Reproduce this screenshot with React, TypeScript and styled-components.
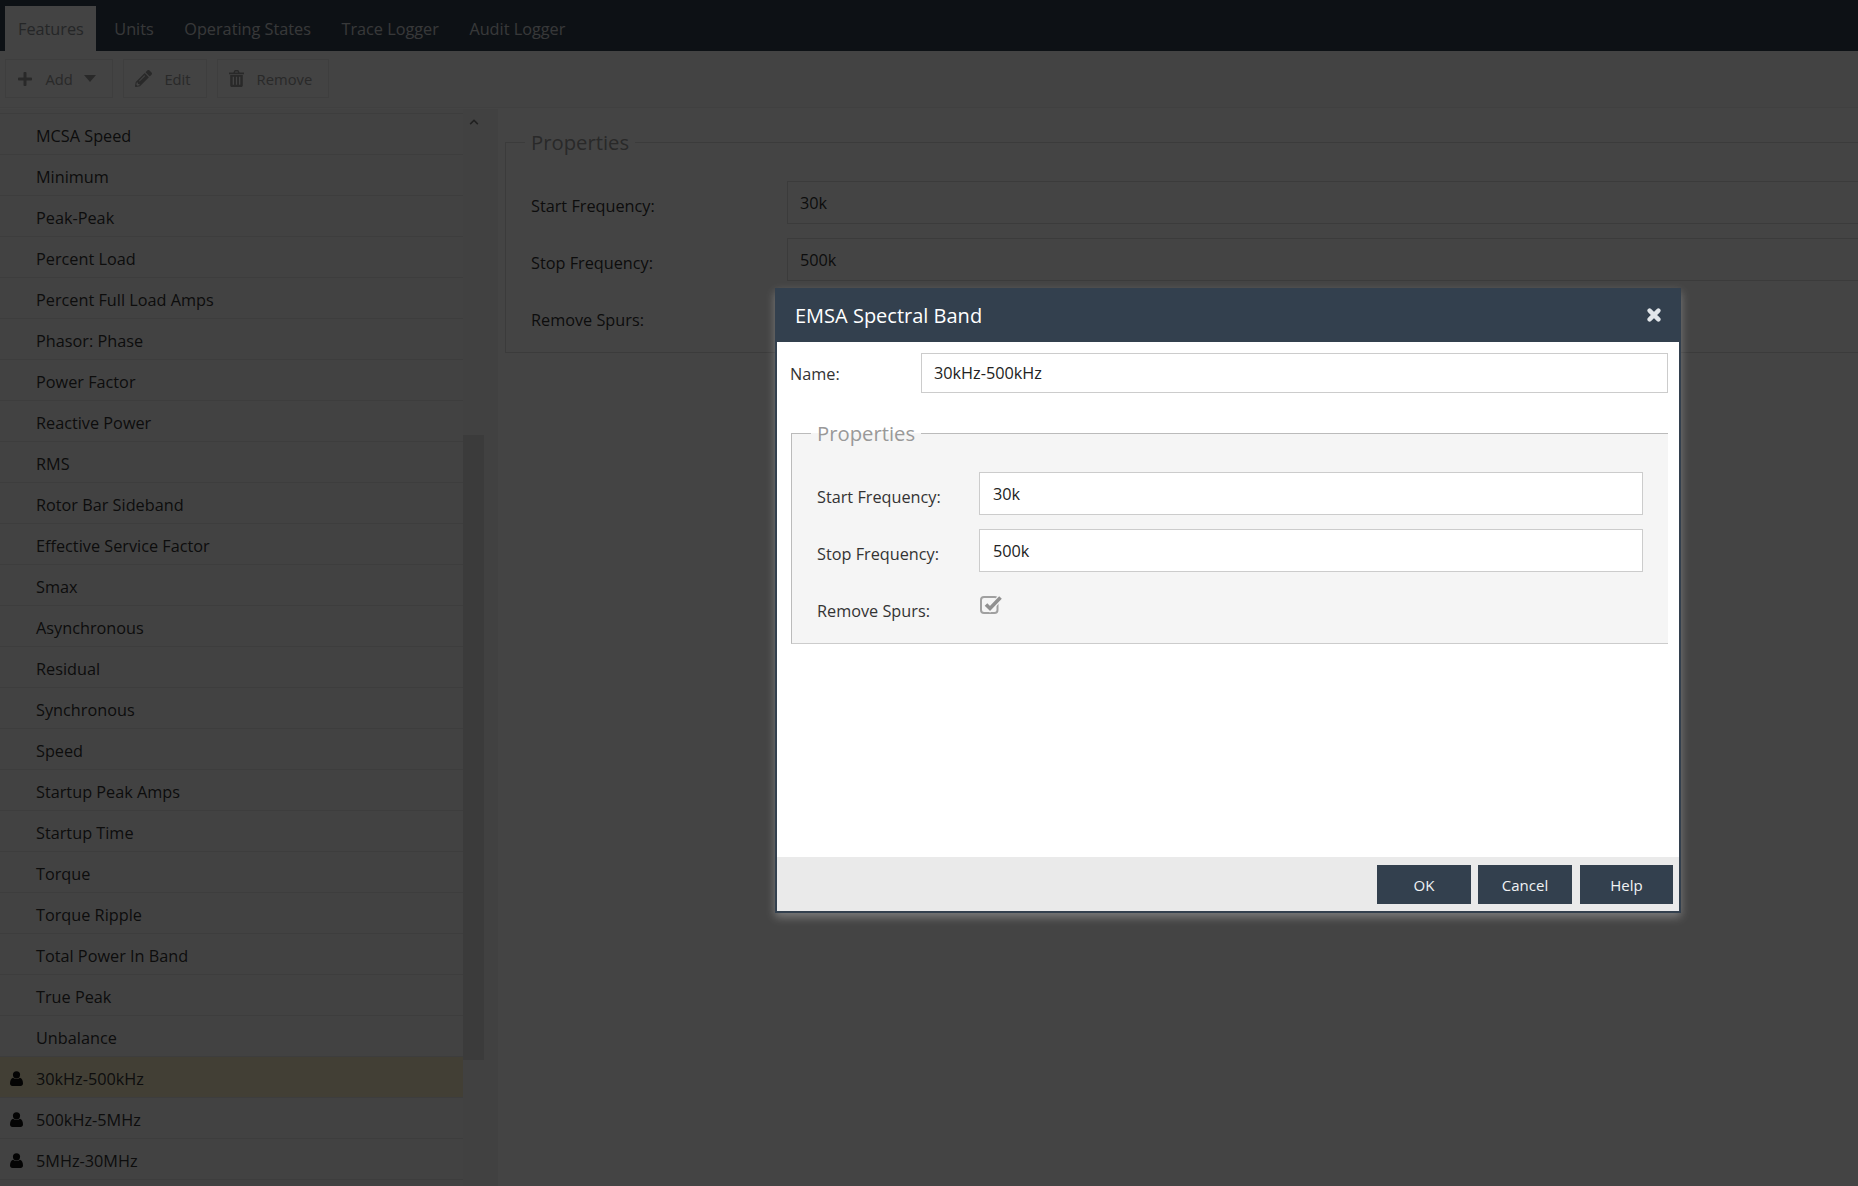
import styled, { createGlobalStyle } from 'styled-components';
import { FaChevronUp, FaPencilAlt, FaPlus } from 'react-icons/fa';

const TABS = ['Features', 'Units', 'Operating States', 'Trace Logger', 'Audit Logger'];

const FEATURES = [
  'MCSA Speed',
  'Minimum',
  'Peak-Peak',
  'Percent Load',
  'Percent Full Load Amps',
  'Phasor: Phase',
  'Power Factor',
  'Reactive Power',
  'RMS',
  'Rotor Bar Sideband',
  'Effective Service Factor',
  'Smax',
  'Asynchronous',
  'Residual',
  'Synchronous',
  'Speed',
  'Startup Peak Amps',
  'Startup Time',
  'Torque',
  'Torque Ripple',
  'Total Power In Band',
  'True Peak',
  'Unbalance',
];

const USER_FEATURES = ['30kHz-500kHz', '500kHz-5MHz', '5MHz-30MHz'];

const CheckIcon = () => (
  <svg width="22" height="20" viewBox="0 0 22 20">
    <rect x="1" y="2" width="16.5" height="16" rx="3" fill="none" stroke="#a0a0a0" strokeWidth="2" />
    <path d="M6 9.5l4 4L20.5 2.5" fill="none" stroke="#f5f5f5" strokeWidth="6" />
    <path d="M6 9.5l4 4L20.5 2.5" fill="none" stroke="#909090" strokeWidth="3.6" />
  </svg>
);

const TrashIcon = () => (
  <svg width="15" height="17" viewBox="0 0 15 17" fill="#999">
    <path d="M0 2.6h4.4l.8-1.9C5.4.3 5.8 0 6.2 0h2.6c.4 0 .8.3 1 .7l.8 1.9H15v1.6H0zM5.9 2.6h3.2l-.5-1.2H6.4z" />
    <path d="M1.2 5h12.6v10.2c0 1-.7 1.8-1.6 1.8H2.8c-.9 0-1.6-.8-1.6-1.8zM3.7 6.8v8h1.3v-8zM6.9 6.8v8h1.2v-8zM10 6.8v8h1.3v-8z" fillRule="evenodd" />
  </svg>
);

const UserIcon = () => (
  <svg width="13" height="15" viewBox="0 0 13 15" fill="currentColor">
    <circle cx="6.5" cy="3.8" r="3.6" />
    <path d="M0 12.6C0 9.6 1 7.4 3 6.8c1 .8 2.2 1.2 3.5 1.2S9 7.6 10 6.8c2 .6 3 2.8 3 5.8 0 1.5-1 2.4-2.4 2.4H2.4C1 15 0 14.1 0 12.6z" />
  </svg>
);

const CloseIcon = () => (
  <svg width="14" height="14" viewBox="0 0 14 14">
    <path d="M2.6 2.6l8.8 8.8M11.4 2.6l-8.8 8.8" fill="none" stroke="#e2e6ea" strokeWidth="4.4" strokeLinecap="round" />
  </svg>
);

const App = () => {
  return (
    <Page>
      <GlobalStyle />
      <TabBar>
        {TABS.map((tab, i) => (
          <Tab key={tab} $active={i === 0}>
            {tab}
          </Tab>
        ))}
      </TabBar>

      <Toolbar>
        <ToolButton>
          <FaPlus size={16} />
          <span>Add</span>
          <Caret />
        </ToolButton>
        <ToolButton>
          <FaPencilAlt size={17} />
          <span>Edit</span>
        </ToolButton>
        <ToolButton>
          <TrashIcon />
          <span>Remove</span>
        </ToolButton>
      </Toolbar>

      <Content>
        <ListPane>
          <List>
            {FEATURES.map((name) => (
              <Row key={name}>
                <RowIcon />
                {name}
              </Row>
            ))}
            {USER_FEATURES.map((name, i) => (
              <Row key={name} $selected={i === 0}>
                <RowIcon>
                  <UserIcon />
                </RowIcon>
                {name}
              </Row>
            ))}
          </List>
          <ScrollTrack>
            <ScrollArrow>
              <FaChevronUp size={10} />
            </ScrollArrow>
            <ScrollThumb />
          </ScrollTrack>
        </ListPane>

        <DetailPane>
          <PageFieldset>
            <PageLegend>Properties</PageLegend>
            <PageField>
              <FieldLabel>Start Frequency:</FieldLabel>
              <PageInput>30k</PageInput>
            </PageField>
            <PageField>
              <FieldLabel>Stop Frequency:</FieldLabel>
              <PageInput>500k</PageInput>
            </PageField>
            <PageField>
              <FieldLabel>Remove Spurs:</FieldLabel>
            </PageField>
          </PageFieldset>
        </DetailPane>
      </Content>

      <Overlay />

      <Dialog>
        <DialogHeader>
          <DialogTitle>EMSA Spectral Band</DialogTitle>
          <CloseIcon />
        </DialogHeader>

        <DialogBody>
          <NameRow>
            <NameLabel>Name:</NameLabel>
            <TextBox>30kHz-500kHz</TextBox>
          </NameRow>

          <DialogFieldset>
            <DialogLegend>Properties</DialogLegend>
            <DialogField>
              <DialogLabel>Start Frequency:</DialogLabel>
              <TextBox>30k</TextBox>
            </DialogField>
            <DialogField>
              <DialogLabel>Stop Frequency:</DialogLabel>
              <TextBox>500k</TextBox>
            </DialogField>
            <DialogField>
              <DialogLabel>Remove Spurs:</DialogLabel>
              <CheckBox>
                <CheckIcon />
              </CheckBox>
            </DialogField>
          </DialogFieldset>
        </DialogBody>

        <DialogFooter>
          <DialogButton>OK</DialogButton>
          <DialogButton>Cancel</DialogButton>
          <DialogButton>Help</DialogButton>
        </DialogFooter>
      </Dialog>
    </Page>
  );
};

const GlobalStyle = createGlobalStyle`
  html, body {
    margin: 0;
    padding: 0;
    background: #fff;
  }

  * {
    box-sizing: border-box;
  }
`;

const Page = styled.div`
  position: relative;
  display: flex;
  flex-direction: column;
  height: 100vh;
  overflow: hidden;

  font-family: 'Open Sans', sans-serif;
  font-size: 16.25px;
  color: #333;
  background: #fff;
`;

const TabBar = styled.div`
  display: flex;
  flex: 0 0 51px;
  align-items: flex-end;
  padding-left: 5px;
  background: #33404e;
`;

const Tab = styled.div<{ $active?: boolean }>`
  display: flex;
  align-items: center;
  height: 45px;
  padding: 0 12.5px 0 13px;
  margin-right: 5px;
  color: ${(p) => (p.$active ? '#8a8f94' : '#cfd3d6')};
  background: ${(p) => (p.$active ? '#fafafa' : 'transparent')};
`;

const Toolbar = styled.div`
  display: flex;
  flex: 0 0 57px;
  gap: 10px;
  padding: 8px 0 0 5px;
  background: #fafafa;
  border-bottom: 1px solid #eee;
`;

const ToolButton = styled.div`
  display: flex;
  align-items: center;
  gap: 12.5px;
  height: 39px;
  padding: 0 15.5px 0 11px;
  font-size: 14.75px;
  color: #999;
  border: 1px solid #e8e8e8;
`;

const Caret = styled.span`
  width: 0;
  height: 0;
  margin-left: -1px;
  border-top: 7px solid #999;
  border-left: 6px solid transparent;
  border-right: 6px solid transparent;
`;

const Content = styled.div`
  display: flex;
  flex: 1;
  min-height: 0;
  padding-top: 1px;
`;

const ListPane = styled.div`
  display: flex;
  flex: 0 0 498px;
  background: #f4f4f4;
`;

const List = styled.div`
  flex: 0 0 463px;
  padding-top: 5px;
  background: #f8f8f8;
`;

const Row = styled.div<{ $selected?: boolean }>`
  display: flex;
  align-items: center;
  height: 41px;
  padding-top: 3px;
  color: #333;
  background: ${(p) => (p.$selected ? '#f8edc8' : 'transparent')};
  border-bottom: 1px solid #e6e6e6;

  &:first-child {
    height: 42px;
    margin-top: -1px;
    border-top: 1px solid #e6e6e6;
  }
`;

const RowIcon = styled.span`
  display: flex;
  flex: 0 0 36px;
  padding-left: 10px;
  color: #111;
`;

const ScrollTrack = styled.div`
  display: flex;
  flex-direction: column;
  flex: 0 0 21px;
`;

const ScrollArrow = styled.div`
  display: flex;
  justify-content: center;
  padding: 8px 0 0 0;
  height: 326px;
  color: #777;
`;

const ScrollThumb = styled.div`
  flex: 0 0 625px;
  background: #ddd;
`;

const DetailPane = styled.div`
  flex: 1;
  min-width: 0;
  padding: 18px 0 0 7px;
`;

const PageFieldset = styled.fieldset`
  height: 225px;
  width: 1500px;
  margin: 1px 0 0 0;
  padding: 25px 25px 0;
  border: 1px solid #ddd;
`;

const PageLegend = styled.legend`
  margin-left: -6px;
  padding: 0 6px;
  font-size: 20.25px;
  color: #999;
`;

const PageField = styled.div`
  display: flex;
  align-items: flex-start;
  height: 57px;
`;

const FieldLabel = styled.label`
  flex: 0 0 256px;
  padding-top: 14px;
`;

const PageInput = styled.div`
  display: flex;
  align-items: center;
  flex: 1;
  height: 43px;
  padding-left: 12px;
  color: #333;
  border: 1px solid #ddd;
`;

const Overlay = styled.div`
  position: absolute;
  inset: 0;
  background: rgba(0, 0, 0, 0.735);
`;

const Dialog = styled.div`
  position: absolute;
  left: 775px;
  top: 288px;
  display: flex;
  flex-direction: column;
  width: 906px;
  height: 625px;
  background: #fff;
  border: 2px solid #33404e;
  box-shadow: 0 4px 9px rgba(255, 255, 255, 0.3);
`;

const DialogHeader = styled.div`
  display: flex;
  align-items: center;
  justify-content: space-between;
  flex: 0 0 54px;
  margin-top: -2px;
  padding: 0 18px 0 18px;
  color: #fff;
  background: #33404e;
`;

const DialogTitle = styled.div`
  font-size: 20px;
`;

const DialogBody = styled.div`
  flex: 1;
  padding: 11px 11px 0 13px;
`;

const NameRow = styled.div`
  display: flex;
  align-items: center;
  height: 40px;
`;

const NameLabel = styled.label`
  flex: 0 0 131px;
  padding-top: 1px;
`;

const TextBox = styled.div`
  display: flex;
  align-items: center;
  flex: 1;
  height: 100%;
  padding-left: 12px;
  color: #222;
  background: #fff;
  border: 1px solid #ccc;
`;

const DialogFieldset = styled.fieldset`
  height: 225px;
  margin: 26px 0 0 1px;
  padding: 25px 25px 0 25px;
  background: #f5f5f5;
  border: 0;
  border-left: 1px solid #bbb;
  border-top: 1px solid #bbb;
  border-bottom: 1px solid #ccc;
`;

const DialogLegend = styled.legend`
  margin-left: -6px;
  padding: 0 6px;
  font-size: 20.25px;
  color: #999;
`;

const DialogField = styled.div`
  display: flex;
  align-items: flex-start;
  height: 43px;
  margin-bottom: 14px;

  ${TextBox} {
    padding-left: 13px;
  }
`;

const DialogLabel = styled.label`
  flex: 0 0 162px;
  padding-top: 13.5px;
`;

const CheckBox = styled.div`
  display: flex;
  margin: 9px 0 0 1px;
`;

const DialogFooter = styled.div`
  display: flex;
  flex: 0 0 54px;
  justify-content: flex-end;
  gap: 7px;
  padding: 8px 6px 0 0;
  background: #eaeaea;
`;

const DialogButton = styled.button`
  width: 94px;
  height: 39px;
  padding: 0;
  font-family: 'Open Sans', sans-serif;
  font-size: 15px;
  color: #f0f2f4;
  background: #33404e;
  border: 0;

  &:last-child {
    width: 93px;
    margin-left: 1px;
  }
`;

export default App;
